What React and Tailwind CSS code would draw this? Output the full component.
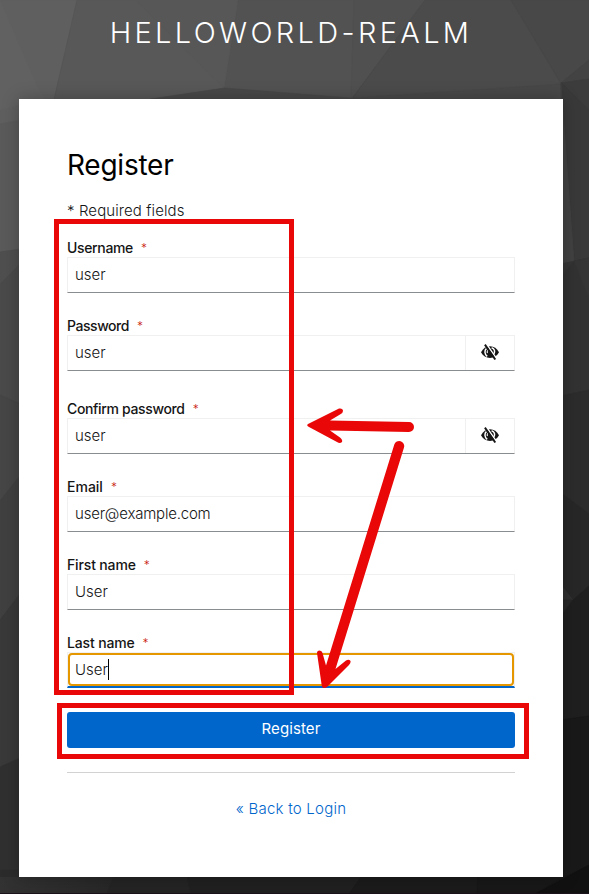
import React from "react";

function Backdrop() {
  const shapes = [
    ["0,0 589,0 589,894 0,894", "#404040"],
    ["300,700 589,700 589,894 300,894", "#191919"],
    ["0,0 77,0 54,99 19,235 0,250", "#5f5f5f"],
    ["0,0 38,88 45,99 0,110", "#616161"],
    ["77,0 238,0 224,88 150,100 54,100", "#585858"],
    ["238,0 354,0 351,99 224,88", "#525252"],
    ["135,0 224,88 238,0", "#575757"],
    ["354,0 425,0 352,98 351,99", "#505050"],
    ["425,0 511,0 561,84 400,98 352,99", "#4b4b4b"],
    ["511,0 589,0 589,60 561,83", "#484848"],
    ["224,88 352,98 561,84 561,105 150,105 150,99", "#484848"],
    ["561,83 589,60 589,79", "#434343"],
    ["561,83 589,79 589,110", "#3c3c3c"],
    ["561,83 589,110 589,258 574,261", "#393939"],
    ["561,83 574,261 561,264", "#424242"],
    ["561,264 574,261 561,277", "#363636"],
    ["574,261 589,258 589,390 561,396 561,277", "#323232"],
    ["574,261 589,258 589,298", "#353535"],
    ["561,396 589,390 589,514 561,493", "#2c2c2c"],
    ["561,493 589,514 589,586 573,600 561,585", "#272727"],
    ["561,585 573,600 561,600", "#303030"],
    ["561,600 573,600 561,616", "#272727"],
    ["573,600 589,586 589,716 561,720 561,616", "#1f1f1f"],
    ["561,720 589,716 589,866 561,878", "#191919"],
    ["0,124 20,120 20,250 0,252", "#5a5a5a"],
    ["0,252 20,249 20,264 0,284", "#4f4f4f"],
    ["0,284 20,264 20,404 0,395", "#4a4a4a"],
    ["0,395 20,404 20,476 0,501", "#464646"],
    ["0,501 20,476 20,594 0,620", "#404040"],
    ["0,620 20,594 20,758 0,767", "#393939"],
    ["0,767 20,758 20,894 0,894", "#303030"],
    ["0,870 116,870 106,894 0,894", "#2b2b2b"],
    ["115,870 186,870 191,894 105,894", "#242424"],
    ["186,870 366,870 350,894 191,894", "#202020"],
    ["366,870 478,870 478,894 349,894", "#1b1b1b"],
    ["478,870 563,870 563,877 535,894 477,894", "#181818"],
    ["535,894 589,865 589,894", "#111111"],
  ];
  return (
    <svg className="absolute inset-0" width="589" height="894" viewBox="0 0 589 894" aria-hidden="true">
      <defs>
        <linearGradient id="lower-left" x1="0" x2="1">
          <stop offset="0" stopColor="#323232" />
          <stop offset="1" stopColor="#272727" />
        </linearGradient>
      </defs>
      {shapes.map(([points, fill]) => (
        <polygon key={points} points={points} fill={fill} stroke={fill} strokeWidth="0.6" />
      ))}
      <polygon points="0,877 113,877 106,894 0,894" fill="url(#lower-left)" />
      <rect y="893" width="589" height="1" fill="#1b131a" />
    </svg>
  );
}

function EyeSlash() {
  return (
    <svg className="-mt-0.5" width="18" height="16" viewBox="0 0 18 16" fill="none" aria-hidden="true">
      <path d="M0 8.2C2 4.4 5.2 2.3 9 2.3s7 2.1 9 5.9c-2 3.7-5.2 5.7-9 5.7s-7-2-9-5.7Z" fill="#151515" />
      <path d="M5.600 4.4C3.200 6.400 3.400 10 6.200 12.400M10.600 3.800c3 1 3.700 3.700 2.300 6.200" stroke="#fff" strokeWidth="1.5" />
      <path d="M8.400 5.400c-2 .5-2.600 2.200-2 3.700" stroke="#fff" strokeWidth="1.1" />
      <path d="M5.600.2 16.100 15.400" stroke="#fff" strokeWidth="1.5" />
      <path d="M3.900.6 14.300 15.500" stroke="#151515" strokeWidth="1.9" />
    </svg>
  );
}

function Field({ label, labelClass, value, valueClass = "", secret, focused, last }) {
  return (
    <div className={secret === "first" ? "mb-[26px]" : last ? "mb-6" : "mb-[21px]"}>
      <label className="flex h-[21px] items-center pt-[3px] text-[14px] font-medium leading-[18px] whitespace-nowrap text-[#151515]">
        <span className={labelClass}>{label}</span>
        <span className="ml-2 text-[12px] font-light text-[#c9190b]">*</span>
      </label>
      <div
        className={
          focused
            ? "flex h-9 border-x border-t border-b-2 border-x-[#f0f0f0] border-t-[#f0f0f0] border-b-[#0066cc]"
            : "flex h-9 border border-[#f0f0f0] border-b-[#8a8d90]"
        }
      >
        <div
          className={
            focused
              ? "flex flex-1 items-center rounded-[4px] border-2 border-[#e59700] pl-[5px]"
              : "flex flex-1 items-center pl-[7px]"
          }
        >
          <span
            className={
              (focused ? "pt-px " : "pb-px ") +
              "text-[15px] font-light leading-6 whitespace-nowrap text-[#151515] " +
              valueClass
            }
          >
            {value}
          </span>
          {focused && <span className="h-[21px] w-px bg-black" />}
        </div>
        {secret && (
          <button type="button" aria-label="Show password" className="flex w-[49px] items-center justify-center border-l border-[#f0f0f0]">
            <EyeSlash />
          </button>
        )}
      </div>
    </div>
  );
}

function Annotations() {
  return (
    <svg className="pointer-events-none absolute inset-0" width="589" height="894" viewBox="0 0 589 894" aria-hidden="true">
      <g fill="none" stroke="#ea0707" strokeWidth="5">
        <rect x="56.5" y="221.5" width="235" height="471" />
        <rect x="59.5" y="705.5" width="467" height="51" />
      </g>
      <g fill="#ea0707">
        <path d="M308 424 L339 408.500 Q343 408 343 411 Q343 413 340 414.500 L330 420.500 L409 422 A5 5 0 0 1 409 432 L330 430.500 L340 437.500 Q343 440 342 442 Q340 444 337 442 L309 427 Q306 425.500 308 424Z" />
        <path d="M394.300 444.500 A5 5 0 0 1 404 447.500 L335.500 669 L346 660.500 Q349 659 350.500 661 Q351 663 349 665 L327 687 Q322 690 321.500 684 L317 653 Q317 650.500 319.500 650.500 Q322 650.500 322.500 653 L326 665.500Z" />
      </g>
    </svg>
  );
}

export default function App() {
  return (
    <main className="relative h-[894px] w-[589px] overflow-hidden font-['Inter','Liberation_Sans',sans-serif]">
      <Backdrop />
      <div className="relative flex h-full flex-col">
        <header className="flex h-[99px] justify-center pt-[15px] pr-[7px]">
          <h1 className="h-9 text-[29px] font-light leading-9 tracking-[3.35px] whitespace-nowrap text-white">HELLOWORLD-REALM</h1>
        </header>
        <section className="ml-[19px] h-[778px] w-[544px] bg-white px-12 pt-[48px] shadow-[0_0_16px_rgba(0,0,0,0.25)]">
          <h2 className="h-9 text-[28px] font-normal leading-9 tracking-[-0.25px] text-black">Register</h2>
          <p className="mt-4 mb-[13px] h-6 text-[15px] font-light leading-6 tracking-[0.1px] text-[#151515]">* Required fields</p>
          <form>
            <Field label="Username" labelClass="tracking-[-0.35px]" value="user" />
            <Field label="Password" labelClass="tracking-[-0.45px]" value="user" secret="first" />
            <Field label="Confirm password" labelClass="tracking-[-0.35px]" value="user" secret="second" />
            <Field label="Email" value="user@example.com" valueClass="tracking-[-0.2px]" />
            <Field label="First name" labelClass="tracking-[-0.15px]" value="User" />
            <Field label="Last name" labelClass="tracking-[-0.15px]" value="User" focused last />
            <button type="button" className="block h-9 w-full rounded-[3px] bg-[#0066cc] pb-0.5 text-[15px] font-normal leading-[34px] tracking-[0.1px] text-white">
              Register
            </button>
          </form>
          <hr className="mt-6 border-[#d2d2d2]" />
          <a className="mt-6 block text-center text-[15px] font-light leading-6 tracking-[0.25px] text-[#0066cc]">« Back to Login</a>
        </section>
      </div>
      <Annotations />
    </main>
  );
}
